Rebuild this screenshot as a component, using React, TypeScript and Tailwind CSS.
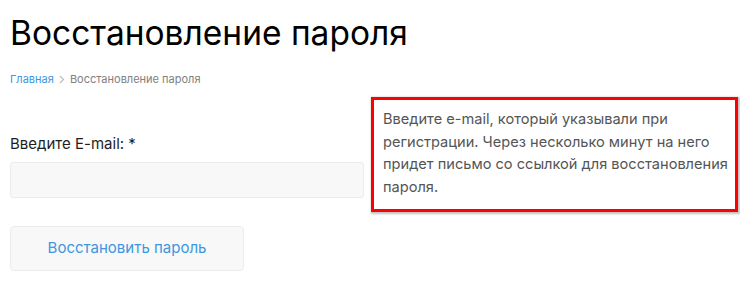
export default function App() {
  return (
    <div className="w-[740px] h-[287px] bg-white overflow-hidden font-['Inter',sans-serif]">
      <div className="pl-[10px] pt-[13px]">
        <h1 className="text-[33.5px] leading-[40px] text-black font-normal">Восстановление пароля</h1>

        <nav className="mt-[19px] flex items-center gap-[5px] text-[11px] leading-[14px]">
          <a href="#" className="text-[#3d96e0]">Главная</a>
          <svg width="6" height="9" viewBox="0 0 6 9" fill="none" stroke="#bbb" strokeWidth="1.1">
            <path d="M1 1l3.5 3.5L1 8" />
          </svg>
          <span className="text-[#808080]">Восстановление пароля</span>
        </nav>

        <div className="flex mt-[11px]">
          <div className="w-[354px] pt-[38px]">
            <label className="block text-[15px] leading-[18px] text-[#1e1e1e]">Введите E-mail: *</label>
            <input
              type="text"
              className="mt-[9px] block w-[354px] h-[36px] bg-[#f8f8f8] border border-[#ececec] rounded-[3px] outline-none"
            />
            <button className="mt-[28px] w-[234px] h-[45px] bg-[#f8f8f8] border border-[#ececec] rounded-[4px] text-[15px] text-[#3d96e0]">
              Восстановить пароль
            </button>
          </div>

          <div className="ml-[7px] w-[367px] h-[115px] border-[3px] border-[#ff0000] shadow-[1px_1px_2px_1px_rgba(0,0,0,0.25)] pl-[9px] pr-[4px] pt-[8px]">
            <p className="text-[14.6px] leading-[22.5px] text-[#555]">
              Введите e-mail, который указывали при регистрации. Через несколько минут на него придет письмо со ссылкой для восстановления пароля.
            </p>
          </div>
        </div>
      </div>
    </div>
  );
}
